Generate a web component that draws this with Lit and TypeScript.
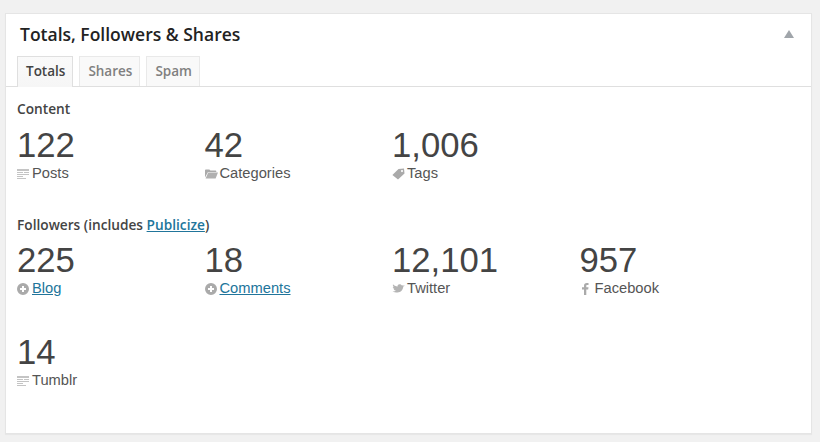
import { LitElement, html, css, svg } from "lit";
import { customElement } from "lit/decorators.js";

const icons: Record<string, unknown> = {
  posts: svg`<svg class="ic" width="13" height="12" viewBox="0 0 13 12"><path fill="#c4c4c4" d="M0 1h12v2H0zM0 4h6v1H0zM7 4h5v1H7zM0 6h12v1H0zM0 8h6v1H0zM0 10h9v1H0z"/></svg>`,
  folder: svg`<svg class="ic" width="13" height="12" viewBox="0 0 13 12"><path fill="#aaa" d="M0 2.200C0 1.700.4 1.400.8 1.400h3.600l1 1.200h5.200c.4 0 .7.300.7.700v.7H3L0 9.500z"/><path fill="#b0b0b0" d="M3.200 4.600H13l-2.400 5.800H.6z"/></svg>`,
  tag: svg`<svg class="ic" width="13" height="12" viewBox="0 0 13 12"><path fill="#aaa" fill-rule="evenodd" d="M6.500 1l5.500-.5.500 5L6 11.500.4 7zM10 2a1 1 0 1 0 .01 0z"/></svg>`,
  plus: svg`<svg class="ic" width="13" height="12" viewBox="0 0 13 12"><path fill="#aaa" fill-rule="evenodd" d="M6 0a6 6 0 1 1 0 12A6 6 0 0 1 6 0zM5 3v2H3v2h2v2h2V7h2V5H7V3z"/></svg>`,
  twitter: svg`<svg class="ic" width="13" height="12" viewBox="0 0 13 12"><path fill="#b4b4b4" d="M13 2.800l-1.700.8c-.2 3-2.500 6-5.800 6-1.900 0-3.500-.3-5-1.100 1.400.1 2.700-.2 3.600-.9-1.200-.1-2-.7-2.400-1.700h1.100C1.700 6 .9 5.100.8 4l1.100.2C1 3.400.6 2.300 1 1.300c1.100 1.300 2.700 2.100 4.600 2.200C5.300 1.900 6.600 1 8 1.200c.7.100 1.200.5 1.500 1z"/></svg>`,
  facebook: svg`<svg class="ic fb" width="9" height="12" viewBox="0 0 9 12"><path fill="#aaa" d="M3 12V6.500H1V4.300h2V2.800C3 1 4.100 0 5.700 0H7.500v2.100H6.300c-.8 0-1 .4-1 1v1.200h2.200l-.3 2.200H5.300V12z"/></svg>`,
};

type Stat = { n: string; label: string; icon: string; link?: boolean };

const content: Stat[] = [
  { n: "122", label: "Posts", icon: "posts" },
  { n: "42", label: "Categories", icon: "folder" },
  { n: "1,006", label: "Tags", icon: "tag" },
];
const followers: Stat[] = [
  { n: "225", label: "Blog", icon: "plus", link: true },
  { n: "18", label: "Comments", icon: "plus", link: true },
  { n: "12,101", label: "Twitter", icon: "twitter" },
  { n: "957", label: "Facebook", icon: "facebook" },
  { n: "14", label: "Tumblr", icon: "posts" },
];

@customElement("app-root")
export class AppRoot extends LitElement {
  static styles = css`
    :host {
      display: block;
      width: 820px;
      height: 442px;
      background: #f1f1f1;
      box-sizing: border-box;
      padding: 13px 8px 8px 5px;
      overflow: hidden;
      font-family: "Liberation Sans", Arial, sans-serif;
      color: #444;
    }
    .card {
      height: 421px;
      box-sizing: border-box;
      background: #fff;
      border: 1px solid #e5e5e5;
      box-shadow: 0 1px 1px rgba(0, 0, 0, 0.04);
    }
    .head {
      display: flex;
      justify-content: space-between;
      align-items: center;
      padding: 4px 17px 5px 14px;
      height: 32px;
      box-sizing: content-box;
    }
    h2 {
      margin: 0;
      font: 600 17.5px/24px "Open Sans", sans-serif;
      color: #222;
    }
    .arrow {
      width: 0;
      height: 0;
      border-left: 5px solid transparent;
      border-right: 5px solid transparent;
      border-bottom: 8px solid #a0a5aa;
    }
    .tabs {
      display: flex;
      gap: 6px;
      padding-left: 11px;
      height: 30px;
      margin-top: 1px;
      border-bottom: 1px solid #dfdfdf;
    }
    .tab {
      height: 30px;
      box-sizing: border-box;
      padding: 0 7px 0 8px;
      border: 1px solid #e9e9e9;
      border-bottom: none;
      background: #f9f9f9;
      font: 600 13.5px/29px "Open Sans", sans-serif;
      color: #808080;
    }
    .tab.on {
      height: 31px;
      border-color: #dfdfdf;
      background: linear-gradient(#fafafa, #f6f6f6);
      color: #444;
    }
    .body {
      padding: 12px 0 0 11px;
    }
    h3 {
      margin: 0;
      font: 600 13.7px/20px "Open Sans", sans-serif;
      color: #444;
    }
    h3 a,
    .lbl a {
      color: #21759b;
      text-decoration: underline;
    }
    .grid {
      display: grid;
      grid-template-columns: repeat(4, 187.5px);
      margin-top: 6px;
    }
    .grid.content {
      margin-top: 7px;
      margin-bottom: 33px;
    }
    .stat {
      height: 92px;
    }
    .content .stat {
      height: auto;
    }
    .num {
      font-size: 34.7px;
      line-height: 39px;
      color: #444;
    }
    .lbl {
      display: flex;
      align-items: center;
      gap: 2px;
      font-size: 14.7px;
      line-height: 17px;
      color: #555;
    }
    .ic {
      flex: none;
    }
    .fb {
      margin-left: 1px;
      margin-right: 3px;
    }
  `;

  private stat(s: Stat) {
    return html`<div class="stat">
      <div class="num">${s.n}</div>
      <div class="lbl">
        ${icons[s.icon]} ${s.link ? html`<a href="#">${s.label}</a>` : html`<span>${s.label}</span>`}
      </div>
    </div>`;
  }

  render() {
    return html`<div class="card">
      <div class="head">
        <h2>Totals, Followers &amp; Shares</h2>
        <div class="arrow"></div>
      </div>
      <div class="tabs">
        <div class="tab on">Totals</div>
        <div class="tab">Shares</div>
        <div class="tab">Spam</div>
      </div>
      <div class="body">
        <h3>Content</h3>
        <div class="grid content">${content.map((s) => this.stat(s))}</div>
        <h3>Followers (includes <a href="#">Publicize</a>)</h3>
        <div class="grid">${followers.map((s) => this.stat(s))}</div>
      </div>
    </div>`;
  }
}
